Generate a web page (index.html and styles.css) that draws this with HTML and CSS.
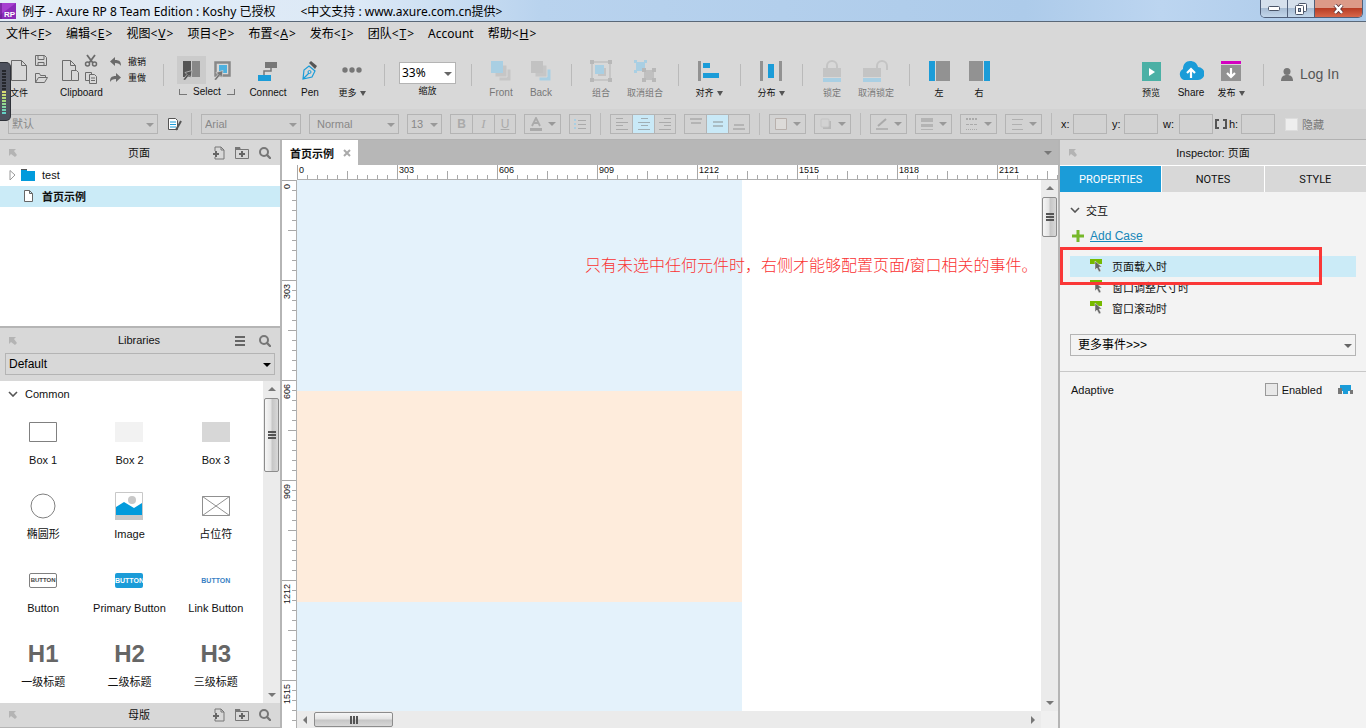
FILE: index.html
```html
<!DOCTYPE html>
<html lang="zh-CN">

<head>
    <meta charset="UTF-8">
    <meta name="viewport" content="width=device-width, initial-scale=1.0">
    <title>例子 - Axure RP 8</title>
    <link rel="stylesheet" href="styles.css">
</head>

<body>
    <!-- shared icons -->
    <svg class="sprite" aria-hidden="true">
        <symbol id="i-dock" viewBox="0 0 8 8">
            <path d="M0 0h7L5 2l3 4-2 2-4-3-2 2z" fill="#b4b4b4" />
        </symbol>
        <symbol id="i-addpage" viewBox="0 0 12 14">
            <path d="M2 5V1h6l3 3v9H2v-2M8 1v3h3" fill="none" stroke="#777" />
            <path d="M0 8h6M3 5v6" stroke="#666" stroke-width="2" />
        </symbol>
        <symbol id="i-addfolder" viewBox="0 0 14 12">
            <path d="M.5 2.500h13v9H.5z" fill="none" stroke="#777" />
            <path d="M0 0h5l1 3H0z" fill="#777" />
            <path d="M4 7h6M7 4v6" stroke="#666" stroke-width="2" />
        </symbol>
        <symbol id="i-search" viewBox="0 0 12 12">
            <circle cx="5" cy="5" r="4" fill="none" stroke="#777" stroke-width="2" />
            <path d="M8 8l3 3" stroke="#777" stroke-width="2.400" stroke-linecap="round" />
        </symbol>
        <symbol id="i-event" viewBox="0 0 12 13">
            <path d="M0 0h12v5H0z" fill="#76b900" />
            <path d="M5 2v9l2-2 2 4 2-1-2-4h3z" fill="#666" stroke="#f3f3f3" stroke-width=".5" />
        </symbol>
        <symbol id="i-chevron" viewBox="0 0 10 6">
            <path d="M1 1l4 4 4-4" fill="none" stroke="#555" stroke-width="1.600" />
        </symbol>
    </svg>

    <header class="title-bar">
        <svg class="app-icon" width="16" height="16" viewBox="0 0 16 16">
            <path d="M0 0h16v16H0z" fill="#8a2bb8" />
            <path d="M0 0h16L0 12z" fill="#a63fd0" />
            <path d="M1 0v16" stroke="#5b1580" />
            <text x="4" y="14" class="app-icon-text">RP</text>
        </svg>
        <span class="title-text">例子 - Axure RP 8 Team Edition : Koshy 已授权 &nbsp; &nbsp; &nbsp; &nbsp;&lt;中文支持 : www.axure.com.cn提供&gt;</span>
        <div class="window-buttons">
            <button aria-label="Minimize"><svg width="12" height="5"><rect x=".5" y=".5" width="11" height="4" rx="1" fill="#fff" stroke="#4a5568" /></svg></button>
            <button aria-label="Restore"><svg width="12" height="12" fill="#fff" stroke="#4a5568"><rect x="3.500" y=".5" width="8" height="8" rx="1" /><rect x=".5" y="2.500" width="8" height="9" rx="1" /><rect x="3.500" y="5.500" width="2" height="3" fill="#9fb4cc" /></svg></button>
            <button class="close" aria-label="Close"><svg width="13" height="10" viewBox="0 0 13 10"><path d="M3 1l7 8M10 1L3 9" stroke="#5b3035" stroke-width="4" /><path d="M3 1l7 8M10 1L3 9" stroke="#fff" stroke-width="2.500" /></svg></button>
        </div>
    </header>

    <nav class="menu">
        <a href="#">文件&lt;<u>F</u>&gt;</a>
        <a href="#">编辑&lt;<u>E</u>&gt;</a>
        <a href="#">视图&lt;<u>V</u>&gt;</a>
        <a href="#">项目&lt;<u>P</u>&gt;</a>
        <a href="#">布置&lt;<u>A</u>&gt;</a>
        <a href="#">发布&lt;<u>I</u>&gt;</a>
        <a href="#">团队&lt;<u>T</u>&gt;</a>
        <a href="#">Account</a>
        <a href="#">帮助&lt;<u>H</u>&gt;</a>
    </nav>

    <div class="toolbar">
        <div class="tool-group file-group">
            <button class="tool file-tool">
                <svg width="38" height="30" viewBox="0 0 38 30" fill="none" stroke="#6b6b6b">
                    <path d="M1.500 6.500h10l5 5v15h-15zM11.500 6.500v5h5" />
                    <path d="M25.500 1.500h9l2 2v8h-11zM28 1.500v4h6v-4M28 11.500v-3h6v3" />
                    <path d="M25.500 28.500v-9h4l1 2h5v2M25.500 28.500l3-5h9l-3 5z" />
                </svg>
                <span class="zh">文件</span>
            </button>
            <button class="tool clip-tool">
                <svg width="38" height="30" viewBox="0 0 38 30" fill="none" stroke="#6b6b6b">
                    <path d="M11.500 26.500h-9v-20h8l5 5v5M10.500 6.500v5h5M11.500 16.500h5l2 2v8h-7z" />
                    <path d="M27 1l6 8M35 1l-6 8" stroke-width="1.800" />
                    <circle cx="27.500" cy="10" r="2" stroke-width="1.500" />
                    <circle cx="34.500" cy="10" r="2" stroke-width="1.500" />
                    <path d="M29 26.500h-3.500v-8h6v2M29.500 20.500h5l2 2v7h-7zM31 24h4M31 26.500h4" />
                </svg>
                <span>Clipboard</span>
            </button>
            <div class="undo-tools">
                <button><svg width="12" height="9"><path d="M5 0v3c5 0 6 2 6 6C10 7 8 6 5 6v3L0 4.500z" fill="#6b6b6b" /></svg><span class="zh">撤销</span></button>
                <button><svg width="12" height="9"><path d="M6 0v3C1 3 0 5 0 9c1-2 3-3 6-3v3l5-4.500z" fill="#6b6b6b" /></svg><span class="zh">重做</span></button>
            </div>
        </div>
        <i class="sep"></i>

        <div class="tool-group select-group">
            <div class="select-tools">
                <div class="select-icons">
                    <button class="active" aria-label="Select intersecting">
                        <svg width="17" height="19" viewBox="0 0 17 19"><path d="M0 0h8v16H0z" fill="#555" /><path d="M9 0h8v16H9z" fill="#888" /><path d="M0 18.500l4-5-2-2 7-2-1 7-2-2-4 5z" fill="#555" stroke="#ccc" stroke-width=".7" /></svg>
                    </button>
                    <button aria-label="Select contained">
                        <svg width="17" height="19" viewBox="0 0 17 19"><path d="M1.500 1.500h14v13h-14z" fill="none" stroke="#888" stroke-width="2.500" /><path d="M5 4h8v8H5z" fill="#4db0de" /><path d="M0 18.500l4-5-2-2 7-2-1 7-2-2-4 5z" fill="#777" stroke="#d8d8d8" stroke-width=".7" /></svg>
                    </button>
                </div>
                <div class="select-label"><i></i><span>Select</span><i></i></div>
            </div>
            <button class="tool medium">
                <svg width="20" height="20"><path d="M7 1h12v6H7z" fill="#777" /><path d="M0 14h13v6H0z" fill="#1b9cd8" /><path d="M13 6v4H6v4" fill="none" stroke="#777" stroke-width="1.500" /></svg>
                <span>Connect</span>
            </button>
            <button class="tool medium">
                <svg width="16" height="20" viewBox="0 0 16 20"><path d="M1 18L2 9l5-4 6 5-3 6zM1 18l6-6" fill="none" stroke="#1b9cd8" stroke-width="1.200" /><circle cx="7.500" cy="11" r="1.500" fill="none" stroke="#1b9cd8" /><path d="M7 2l2-2 6 5-2 3z" fill="#555" /></svg>
                <span>Pen</span>
            </button>
            <button class="tool medium">
                <svg width="20" height="20" fill="#777"><circle cx="3" cy="9" r="2.700" /><circle cx="10" cy="9" r="2.700" /><circle cx="17" cy="9" r="2.700" /></svg>
                <span class="zh drop">更多</span>
            </button>
        </div>
        <i class="sep"></i>

        <div class="tool-group zoom-group">
            <div class="zoom">
                <div class="combo white">
                    <select id="zoom"><option>33%</option></select>
                </div>
                <label class="zh" for="zoom">缩放</label>
            </div>
        </div>
        <i class="sep"></i>

        <div class="tool-group order-group">
            <button class="tool" disabled>
                <svg width="20" height="20"><path d="M8 8h12v12H8z" fill="#c6c6c6" stroke="#d8d8d8" /><path d="M4 4h12v12H4z" fill="#c6c6c6" stroke="#d8d8d8" /><path d="M0 0h12v12H0z" fill="#a9cfe3" /></svg>
                <span>Front</span>
            </button>
            <button class="tool" disabled>
                <svg width="20" height="20"><path d="M8 8h12v12H8z" fill="#a9cfe3" stroke="#d8d8d8" /><path d="M4 4h12v12H4z" fill="#c6c6c6" stroke="#d8d8d8" /><path d="M0 0h12v12H0z" fill="#c2c2c2" /></svg>
                <span>Back</span>
            </button>
        </div>
        <i class="sep"></i>

        <div class="tool-group wide-group">
            <button class="tool wide" disabled>
                <svg width="22" height="22"><path d="M2 2h18v18H2z" fill="none" stroke="#b4b4b4" /><path d="M8 8h8v8H8z" fill="#c4c4c4" /><path d="M5 5h9v9H5z" fill="#a9cfe3" /><path d="M0 0h4v4H0zM18 0h4v4h-4zM0 18h4v4H0zM18 18h4v4h-4z" fill="#b8b8b8" /></svg>
                <span class="zh">组合</span>
            </button>
            <button class="tool wide" disabled>
                <svg width="22" height="22"><path d="M2 2h9v9H2z" fill="#a9cfe3" /><path d="M10 10h10v10H10z" fill="#c0c0c0" /><path d="M0 0h3v3H0zM10 0h3v3h-3zM0 10h3v3H0z" fill="#a9cfe3" /><path d="M8 8h4v4H8zM18 8h4v4h-4zM8 18h4v4H8zM18 18h4v4h-4z" fill="#b8b8b8" /></svg>
                <span class="zh">取消组合</span>
            </button>
        </div>
        <i class="sep"></i>

        <div class="tool-group single-group">
            <button class="tool">
                <svg width="22" height="20"><path d="M0 0h3v20H0z" fill="#929292" /><path d="M5 2h7v5H5zM5 12h16v5H5z" fill="#1b9cd8" /></svg>
                <span class="zh drop">对齐</span>
            </button>
        </div>
        <i class="sep"></i>

        <div class="tool-group single-group">
            <button class="tool">
                <svg width="22" height="20"><path d="M0 0h3v20H0zM19 0h3v20h-3z" fill="#929292" /><path d="M8 3h6v14H8z" fill="#1b9cd8" /></svg>
                <span class="zh drop">分布</span>
            </button>
        </div>
        <i class="sep"></i>

        <div class="tool-group wide-group">
            <button class="tool wide" disabled>
                <svg width="18" height="22"><path d="M4 9V6a5 5 0 0 1 10 0v3" fill="none" stroke="#c4c4c4" stroke-width="2" /><path d="M0 8h18v9H0z" fill="#c4c4c4" /><path d="M0 18h18v4H0z" fill="#a9cfe3" /></svg>
                <span class="zh">锁定</span>
            </button>
            <button class="tool wide" disabled>
                <svg width="26" height="22"><path d="M14 9V6a5 5 0 0 1 10 0v4" fill="none" stroke="#c4c4c4" stroke-width="2" /><path d="M0 8h18v9H0z" fill="#c4c4c4" /><path d="M0 18h18v4H0z" fill="#a9cfe3" /></svg>
                <span class="zh">取消锁定</span>
            </button>
        </div>
        <i class="sep"></i>

        <div class="tool-group">
            <button class="tool">
                <svg width="21" height="20"><path d="M0 0h6v20H0z" fill="#1b9cd8" /><path d="M7 0h14v20H7z" fill="#929292" /></svg>
                <span class="zh">左</span>
            </button>
            <button class="tool">
                <svg width="21" height="20"><path d="M0 0h14v20H0z" fill="#929292" /><path d="M15 0h6v20h-6z" fill="#1b9cd8" /></svg>
                <span class="zh">右</span>
            </button>
        </div>

        <div class="tool-group share-group">
            <button class="tool">
                <svg width="19" height="19"><path d="M0 0h19v19H0z" fill="#4bb0a5" /><path d="M7 6l6 4-6 4z" fill="#fff" /></svg>
                <span class="zh">预览</span>
            </button>
            <button class="tool">
                <svg width="26" height="20"><path d="M6 19a6 6 0 0 1-1-11C5 3 8 0 12 0s7 2 8 6a6.500 6.500 0 0 1 0 13z" fill="#1b9cd8" /><path d="M13 17V9M9 12l4-4 4 4" fill="none" stroke="#fff" stroke-width="2.200" /></svg>
                <span>Share</span>
            </button>
            <button class="tool">
                <svg width="20" height="20"><path d="M0 0h20v3H0z" fill="#d400c0" /><path d="M0 4h20v16H0z" fill="#929292" /><path d="M10 7v8M6 12l4 4 4-4" fill="none" stroke="#fff" stroke-width="2.200" /></svg>
                <span class="zh drop">发布</span>
            </button>
        </div>
        <i class="sep"></i>
        <button class="login">
            <svg width="12" height="13"><circle cx="6" cy="3.500" r="3.500" fill="#777" /><path d="M0 13c0-4 2-6 6-6s6 2 6 6z" fill="#777" /></svg>
            Log In
        </button>
        <div class="meter"><i></i></div>
    </div>

    <div class="format-bar">
        <div class="combo w-style"><select aria-label="样式" disabled><option>默认</option></select></div>
        <button class="plain" aria-label="Manage styles">
            <svg width="14" height="14" viewBox="0 0 14 14"><path d="M.500 1.500h7l2 2v9h-9z" fill="#fff" stroke="#555" /><path d="M2 5h6M2 7.500h6M2 10h6" stroke="#1b9cd8" /><path d="M8 13l5-9" stroke="#555" stroke-width="2" /></svg>
        </button>
        <i class="sep"></i>
        <div class="combo w-font"><select aria-label="Font" disabled><option>Arial</option></select></div>
        <div class="combo w-weight"><select aria-label="Weight" disabled><option>Normal</option></select></div>
        <div class="combo w-size"><select aria-label="Size" disabled><option>13</option></select></div>
        <div class="seg">
            <button disabled><b>B</b></button>
            <button disabled><em>I</em></button>
            <button disabled><u>U</u></button>
        </div>
        <button class="dd" disabled aria-label="Text color"><svg width="14" height="14"><path d="M3 9l4-8 4 8M4 6h6" fill="none" stroke="#aaa" stroke-width="1.800" /><path d="M1 11h12v3H1z" fill="#aaa" /></svg></button>
        <button class="box" disabled aria-label="Bullets"><svg width="12" height="12"><path d="M0 1h2v2H0zM0 5h2v2H0zM0 9h2v2H0z" fill="#a9cfe3" /><path d="M4 2.500h8M4 6.500h8M4 10.500h8" stroke="#aaa" /></svg></button>
        <i class="sep"></i>
        <div class="seg">
            <button disabled aria-label="Left"><svg width="12" height="12"><path d="M0 .5h7M0 4.500h12M0 7.500h7M0 11.500h12" stroke="#aaa" /></svg></button>
            <button class="on" disabled aria-label="Center"><svg width="12" height="12"><path d="M3 .5h7M0 4.500h12M3 7.500h7M0 11.500h12" stroke="#a0aeb4" /></svg></button>
            <button disabled aria-label="Right"><svg width="12" height="12"><path d="M5 .5h7M0 4.500h12M5 7.500h7M0 11.500h12" stroke="#aaa" /></svg></button>
        </div>
        <div class="seg">
            <button disabled aria-label="Top"><svg width="12" height="12"><path d="M0 1h12M1 5h10" stroke="#aaa" stroke-width="1.500" /></svg></button>
            <button class="on" disabled aria-label="Middle"><svg width="12" height="12"><path d="M1 4h10M1 8h10" stroke="#a0aeb4" stroke-width="1.500" /></svg></button>
            <button disabled aria-label="Bottom"><svg width="12" height="12"><path d="M1 7h10M0 11h12" stroke="#aaa" stroke-width="1.500" /></svg></button>
        </div>
        <i class="sep"></i>
        <button class="dd" disabled aria-label="Fill"><svg width="14" height="14"><path d="M1.500 1.500h11v11h-11z" fill="#dcdad8" stroke="#b8b0ac" /></svg></button>
        <button class="dd" disabled aria-label="Shadow"><svg width="14" height="14"><path d="M4 4h8v8H4z" fill="#b8b8b8" /><rect x="2" y="2" width="8" height="8" rx="1" fill="#d2d2d2" stroke="#c4c4c4" /></svg></button>
        <i class="sep"></i>
        <button class="dd" disabled aria-label="Line color"><svg width="14" height="14"><path d="M3 9l8-7" stroke="#aaa" stroke-width="2" /><path d="M1 11h12v2H1z" fill="#b4b4b4" /></svg></button>
        <button class="dd" disabled aria-label="Line width"><svg width="14" height="14"><path d="M1 1h12v4H1zM1 7h12v3H1zM1 12h12v1H1z" fill="#b4b4b4" /></svg></button>
        <button class="dd" disabled aria-label="Line style"><svg width="14" height="14" fill="none" stroke="#aaa"><path d="M1 2h12" stroke-width="2" stroke-dasharray="2 1" /><path d="M1 7.500h12" stroke-dasharray="3 1" /><path d="M1 12.500h12" stroke-dasharray="1 1" /></svg></button>
        <button class="dd" disabled aria-label="Arrow style"><svg width="14" height="14"><path d="M2 2.500h11M2 7.500h10M2 12.500h11" stroke="#b0b0b0" /></svg></button>
        <i class="sep"></i>
        <div class="fields">
            <label for="pos-x">x:</label><input type="text" id="pos-x" disabled>
            <label for="pos-y">y:</label><input type="text" id="pos-y" disabled>
            <label for="size-w">w:</label><input type="text" id="size-w" disabled>
            <svg class="lock-ratio" width="12" height="10"><path d="M4 1H1v8h3M8 1h3v8H8" fill="none" stroke="#555" stroke-width="2" /></svg>
            <label for="size-h">h:</label><input type="text" id="size-h" disabled>
        </div>
        <label class="hide-check"><input type="checkbox" disabled>隐藏</label>
    </div>

    <main class="main">
        <aside class="left">
            <div class="panel-head">
                <svg width="8" height="8"><use href="#i-dock" /></svg>
                <h2>页面</h2>
                <button aria-label="Add page"><svg width="12" height="14"><use href="#i-addpage" /></svg></button>
                <button aria-label="Add folder"><svg width="14" height="12"><use href="#i-addfolder" /></svg></button>
                <button aria-label="Search"><svg width="12" height="12"><use href="#i-search" /></svg></button>
            </div>
            <ul class="tree">
                <li>
                    <svg width="27" height="12"><path d="M1 1.500l5 4.500-5 5z" fill="#fff" stroke="#999" /><path d="M12 0h6v2h8v10H12z" fill="#029bdc" /><path d="M12 0h6v1h-6z" fill="#555" /></svg>
                    <span>test</span>
                </li>
                <li class="selected">
                    <svg width="27" height="12"><path d="M15.500.500h5l3 3v8h-8zM20.500.500v3h3" fill="#fff" stroke="#666" /></svg>
                    <span>首页示例</span>
                </li>
            </ul>

            <div class="panel-head lib-head">
                <svg width="8" height="8"><use href="#i-dock" /></svg>
                <h2>Libraries</h2>
                <button aria-label="Options"><svg width="10" height="10"><path d="M0 1h10M0 5h10M0 9h10" stroke="#666" stroke-width="2" /></svg></button>
                <button aria-label="Search"><svg width="12" height="12"><use href="#i-search" /></svg></button>
            </div>
            <div class="lib-select">
                <div class="combo dark"><select aria-label="Library"><option>Default</option></select></div>
            </div>
            <div class="library">
                <div class="lib-content">
                    <h3><svg width="10" height="6"><use href="#i-chevron" /></svg>Common</h3>
                    <div class="widgets">
                        <figure><svg width="28" height="20"><path d="M.500.500h27v19H.500z" fill="#fff" stroke="#808080" /></svg><figcaption>Box 1</figcaption></figure>
                        <figure><svg width="28" height="20"><path d="M0 0h28v20H0z" fill="#f2f2f2" /></svg><figcaption>Box 2</figcaption></figure>
                        <figure><svg width="28" height="20"><path d="M0 0h28v20H0z" fill="#d7d7d7" /></svg><figcaption>Box 3</figcaption></figure>
                        <figure><svg width="26" height="26"><circle cx="13" cy="13" r="12" fill="#fff" stroke="#808080" /></svg><figcaption>椭圆形</figcaption></figure>
                        <figure><svg width="28" height="28"><path d="M.500.500h27v27H.500z" fill="#fff" stroke="#c8c8c8" /><path d="M0 23h28v5H0z" fill="#c8c8c8" /><circle cx="17" cy="8" r="4" fill="#c8c8c8" /><path d="M1 15l8-5 10 6 8-5v12H1z" fill="#029bdc" /></svg><figcaption>Image</figcaption></figure>
                        <figure><svg width="28" height="20"><path d="M.500.500h27v19H.500zM.500.500l27 19M27.500.500l-27 19" fill="none" stroke="#909090" /></svg><figcaption>占位符</figcaption></figure>
                        <figure><span class="mini outline">BUTTON</span><figcaption>Button</figcaption></figure>
                        <figure><span class="mini primary">BUTTON</span><figcaption>Primary Button</figcaption></figure>
                        <figure><span class="mini link">BUTTON</span><figcaption>Link Button</figcaption></figure>
                        <figure><span class="heading">H1</span><figcaption>一级标题</figcaption></figure>
                        <figure><span class="heading">H2</span><figcaption>二级标题</figcaption></figure>
                        <figure><span class="heading">H3</span><figcaption>三级标题</figcaption></figure>
                    </div>
                </div>
                <div class="scroll-y">
                    <i class="up"></i>
                    <div class="thumb lib-thumb"></div>
                    <i class="down"></i>
                </div>
            </div>

            <div class="panel-head master-head">
                <svg width="8" height="8"><use href="#i-dock" /></svg>
                <h2>母版</h2>
                <button aria-label="Add master"><svg width="12" height="14"><use href="#i-addpage" /></svg></button>
                <button aria-label="Add folder"><svg width="14" height="12"><use href="#i-addfolder" /></svg></button>
                <button aria-label="Search"><svg width="12" height="12"><use href="#i-search" /></svg></button>
            </div>
        </aside>

        <section class="center">
            <div class="doc-tabs">
                <div class="doc-tab">首页示例<button aria-label="Close tab"><svg width="8" height="8"><path d="M1 1l6 6M7 1L1 7" stroke="#aaa" stroke-width="2" /></svg></button></div>
                <i class="down"></i>
            </div>
            <div class="workspace">
                <div class="ruler-x">
                    <span>0</span><span>303</span><span>606</span><span>909</span><span>1212</span><span>1515</span><span>1818</span><span>2121</span>
                </div>
                <div class="ruler-y">
                    <span>0</span><span>303</span><span>606</span><span>909</span><span>1212</span><span>1515</span>
                </div>
                <div class="canvas">
                    <div class="page-shape">
                        <div class="band"></div>
                        <div class="band warm"></div>
                        <div class="band rest"></div>
                    </div>
                    <p class="note">只有未选中任何元件时，右侧才能够配置页面/窗口相关的事件。</p>
                </div>
                <div class="scroll-y">
                    <i class="up"></i>
                    <div class="thumb canvas-thumb"></div>
                    <i class="down"></i>
                </div>
                <div class="scroll-x">
                    <i class="prev"></i>
                    <div class="thumb"></div>
                    <i class="next"></i>
                </div>
            </div>
        </section>

        <aside class="inspector">
            <div class="panel-head">
                <svg width="8" height="8"><use href="#i-dock" /></svg>
                <h2>Inspector: 页面</h2>
            </div>
            <div class="tabs">
                <button class="current">PROPERTIES</button>
                <button>NOTES</button>
                <button>STYLE</button>
            </div>
            <div class="interactions">
                <h3><svg width="10" height="6"><use href="#i-chevron" /></svg>交互</h3>
                <div class="add-case">
                    <svg width="12" height="12"><path d="M0 6h12M6 0v12" stroke="#76b82a" stroke-width="3" /></svg>
                    <a href="#">Add Case</a>
                </div>
                <ul class="events">
                    <li class="selected"><svg width="12" height="13"><use href="#i-event" /></svg>页面载入时</li>
                    <li><svg width="12" height="13"><use href="#i-event" /></svg>窗口调整尺寸时</li>
                    <li><svg width="12" height="13"><use href="#i-event" /></svg>窗口滚动时</li>
                </ul>
                <div class="combo more-events"><select aria-label="更多事件"><option>更多事件&gt;&gt;&gt;</option></select></div>
                <div class="highlight"></div>
            </div>
            <div class="adaptive">
                <span>Adaptive</span>
                <label><input type="checkbox">Enabled</label>
                <svg width="15" height="10"><path d="M2 0h11v6H2z" fill="#1b9cd8" /><path d="M0 3h4v6H0zM12 5h3v4h-3z" fill="#777" /><path d="M5 6h5v3H5z" fill="#1b9cd8" /></svg>
            </div>
        </aside>
    </main>
</body>

</html>
```
FILE: styles.css
```css
* {
    box-sizing: border-box;
}

body {
    margin: 0;
    height: 100vh;
    display: flex;
    flex-direction: column;
    overflow: hidden;
    background-color: #d8d8d8;
    color: #111;
    font-family: "Liberation Sans", "Noto Sans CJK SC", sans-serif;
    font-size: 11px;
}

button {
    border: 0;
    padding: 0;
    background: none;
    color: inherit;
    font: inherit;
}

button,
select,
input {
    border-radius: 0;
}

svg {
    display: block;
    flex: none;
}

ul,
h2,
h3,
p,
figure {
    margin: 0;
    padding: 0;
    list-style: none;
    font-size: 11px;
    font-weight: normal;
}

.sprite {
    position: absolute;
    width: 0;
    height: 0;
}

/* title bar and menu */
.title-bar {
    flex: none;
    height: 22px;
    display: flex;
    align-items: center;
    gap: 6px;
    border-bottom: 1px solid #5a6878;
    background: linear-gradient(to right, #e4edf7 0, #dce9f6 360px, #b9d3ee 540px, #adcbea 75%, #bcd5f0 85%, #a9c8e8);
    font-family: "Noto Sans", "Noto Sans CJK SC", sans-serif;
    font-size: 12px;
    color: #000;
}

.app-icon-text {
    font: bold 8px "Liberation Sans", sans-serif;
    fill: #fff;
}

.title-text {
    flex: 1;
    white-space: nowrap;
}

.window-buttons {
    align-self: flex-start;
    display: flex;
    margin-right: 3px;
    border: 1px solid #50607a;
    border-top: 0;
    border-radius: 0 0 5px 5px;
    overflow: hidden;
}

.window-buttons button {
    width: 27px;
    height: 17px;
    display: flex;
    align-items: center;
    justify-content: center;
    border-right: 1px solid #50607a;
    background: linear-gradient(#d5e0ec 45%, #a8bdd4 50%, #c2d6ea);
}

.window-buttons .close {
    width: 47px;
    border-right: 0;
    background: linear-gradient(#dc9a88 45%, #b83e26 50%, #d8674a);
}

.menu {
    flex: none;
    height: 24px;
    display: flex;
    align-items: center;
    gap: 14px;
    padding-left: 6px;
    font-family: "Noto Sans", "Noto Sans CJK SC", sans-serif;
    font-size: 12px;
    line-height: 18px;
}

.menu a {
    color: #000;
    text-decoration: none;
}

.menu u {
    margin: 0 1px;
}

/* toolbar */
.toolbar {
    flex: none;
    position: relative;
    height: 63px;
    display: flex;
    font-size: 10px;
}

.sep {
    flex: none;
    width: 1px;
    height: 22px;
    background-color: #bababa;
}

.toolbar .sep {
    margin-top: 18px;
}

.tool-group {
    display: flex;
    padding: 10px 9px 0;
}

.tool {
    width: 40px;
    height: 44px;
    display: flex;
    flex-direction: column;
    align-items: center;
    white-space: nowrap;
    line-height: 14px;
}

.tool svg {
    margin: auto;
}

.tool:disabled {
    color: #777;
}

.tool.medium {
    width: 42px;
}

.tool.wide {
    width: 44px;
}

.order-group {
    padding-right: 10px;
}

.wide-group {
    padding: 10px 11px 0 7px;
}

.single-group {
    padding: 10px 11px 0 10px;
}

.zh {
    font-size: 9px;
}

.drop::after {
    content: "";
    display: inline-block;
    margin-left: 3px;
    border: 3px solid transparent;
    border-top: 5px solid #555;
    border-bottom: 0;
}

.file-group {
    width: 163px;
    padding: 8px 0 0 10px;
}

.file-tool,
.clip-tool {
    width: 50px;
    height: 48px;
    align-items: flex-start;
}

.file-tool svg,
.clip-tool svg {
    margin: 0 0 2px;
}

.undo-tools {
    display: flex;
    flex-direction: column;
    gap: 2px;
}

.undo-tools button {
    height: 14px;
    display: flex;
    align-items: center;
    gap: 6px;
}

.select-group {
    padding: 10px 11px 0 13px;
}

.select-tools {
    width: 60px;
    margin-right: 10px;
}

.select-icons {
    display: flex;
    gap: 2px;
}

.select-icons button {
    width: 30px;
    height: 28px;
    display: flex;
    align-items: center;
    justify-content: center;
}

.select-icons .active {
    background-color: #cbcbcb;
}

.select-label {
    display: flex;
    justify-content: center;
    gap: 6px;
    margin-top: 1px;
    line-height: 14px;
}

.select-label i {
    width: 8px;
    height: 6px;
    border: 1px solid #777;
    border-width: 0 0 1px 1px;
    margin-top: 4px;
}

.select-label i:last-child {
    border-width: 0 1px 1px 0;
}

.zoom-group {
    padding: 16px 15px 0 14px;
}

.zoom {
    width: 57px;
    display: flex;
    flex-direction: column;
    align-items: center;
    line-height: 14px;
}

.share-group {
    margin-left: auto;
    padding-right: 12px;
}

.login {
    width: 102px;
    height: 20px;
    margin-top: 18px;
    padding-left: 17px;
    display: flex;
    align-items: center;
    gap: 7px;
    font-size: 14px;
    color: #555;
}

.meter {
    position: absolute;
    left: 0;
    top: 16px;
    z-index: 2;
    width: 11px;
    height: 59px;
    padding: 6px 4px 6px 2px;
    border: 1px solid #2e3138;
    border-left: 0;
    border-radius: 0 5px 5px 0;
    background-color: #4e525e;
}

.meter i {
    display: block;
    height: 100%;
    background:
        repeating-linear-gradient(#4e525e 0 1px, transparent 1px 3px),
        linear-gradient(#25272c 48%, #e2dc70 48%, #a5d97b 70%, #5fd0cb);
}

/* drop-downs */
.combo {
    flex: none;
    position: relative;
    height: 20px;
}

.combo::after {
    content: "";
    position: absolute;
    right: 4px;
    top: 50%;
    margin-top: -1px;
    border: 4px solid transparent;
    border-top-color: #666;
    border-bottom: 0;
    pointer-events: none;
}

.combo select {
    width: 100%;
    height: 100%;
    padding: 0 14px 0 3px;
    border: 1px solid #b4b4b4;
    background: none;
    appearance: none;
    color: #000;
    font: inherit;
    font-size: 12px;
}

.combo.white {
    width: 57px;
    height: 22px;
}

.combo.white select {
    background-color: #fff;
    padding-left: 2px;
    font-family: "Noto Sans", sans-serif;
}

.combo.dark {
    height: 22px;
}

.combo.dark::after {
    border-top-color: #000;
}

/* format bar */
.format-bar {
    flex: none;
    height: 31px;
    display: flex;
    align-items: center;
    gap: 8px;
    padding-left: 8px;
    border-bottom: 1px solid #b2b2b2;
    background-color: #d2d2d2;
}

.format-bar .sep {
    margin: 0 1px;
}

.format-bar .combo select {
    color: #888;
    font-size: 11px;
    opacity: 1;
}

.format-bar .combo::after {
    border-top-color: #999;
}

.format-bar .w-weight select {
    padding-left: 7px;
}

.w-style {
    width: 150px;
}

.w-font {
    width: 100px;
}

.w-weight {
    width: 90px;
}

.w-size {
    width: 35px;
}

.plain {
    width: 16px;
    padding-left: 2px;
}

.seg {
    flex: none;
    display: flex;
    border: 1px solid #b4b4b4;
}

.seg button {
    width: 22px;
    height: 18px;
    display: flex;
    align-items: center;
    justify-content: center;
    border-right: 1px solid #b4b4b4;
    color: #aaa;
    font-size: 12px;
}

.seg button:last-child {
    width: 20px;
    border-right: 0;
}

.seg em {
    font-family: "Liberation Serif", serif;
    font-size: 13px;
}

.seg .on {
    background-color: #c9e9f7;
}

.dd,
.box {
    flex: none;
    width: 37px;
    height: 20px;
    display: flex;
    align-items: center;
    justify-content: space-between;
    padding: 0 4px;
    border: 1px solid #b4b4b4;
}

.box {
    width: 22px;
}

.dd::after {
    content: "";
    border: 4px solid transparent;
    border-top-color: #999;
    border-bottom: 0;
}

.fields {
    display: flex;
    align-items: center;
}

.fields label {
    min-width: 12px;
}

.fields input {
    width: 34px;
    height: 20px;
    margin-right: 5px;
    border: 1px solid #b4b4b4;
    background: none;
}

.fields label[for="size-w"] {
    width: 16px;
}

.fields #size-w,
.fields #size-h {
    margin-right: 2px;
}

.lock-ratio {
    margin-right: 2px;
}

.hide-check {
    display: flex;
    align-items: center;
    gap: 4px;
    color: #777;
    font-size: 11px;
    white-space: nowrap;
}

input[type="checkbox"] {
    width: 13px;
    height: 13px;
    margin: 0;
    border: 1px solid #999;
    background-color: #e8e8e8;
    appearance: none;
}

.hide-check input[type="checkbox"] {
    border-color: #ddd;
    background-color: #eee;
}

/* panels */
.main {
    flex: 1;
    min-height: 0;
    display: grid;
    grid-template-columns: 282px 1fr 308px;
}

.left {
    min-height: 0;
    display: flex;
    flex-direction: column;
    border-right: 2px solid #b5b5b5;
}

.panel-head {
    position: relative;
    flex: none;
    height: 25px;
    display: flex;
    align-items: center;
    gap: 10px;
    padding: 0 9px;
    background-color: #d8d8d8;
}

.panel-head > svg {
    margin-right: auto;
}

.panel-head h2 {
    position: absolute;
    left: 0;
    right: 0;
    padding-bottom: 2px;
    text-align: center;
    pointer-events: none;
}

.left .panel-head h2 {
    right: 2px;
}

.tree {
    height: 161px;
    background-color: #fff;
}

.tree li {
    height: 21px;
    display: flex;
    align-items: center;
    gap: 6px;
    padding: 0 0 2px 9px;
}

.selected {
    background-color: #cbebf7;
}

.tree .selected {
    font-weight: bold;
}

.lib-head {
    height: 27px;
    border-top: 2px solid #b5b5b5;
}

.lib-head button:first-of-type {
    margin-right: 4px;
}

.lib-select {
    padding: 0 5px 6px;
}

.library {
    flex: 1;
    min-height: 0;
    display: flex;
    background-color: #fff;
}

.lib-content {
    flex: 1;
    overflow: hidden;
}

.library h3 {
    height: 29px;
    display: flex;
    align-items: center;
    gap: 7px;
    padding: 0 0 3px 8px;
}

.widgets {
    display: grid;
    grid-template-columns: repeat(3, 1fr);
    margin-right: 4px;
}

.widgets figure {
    height: 74px;
    display: grid;
    grid-template-rows: 44px 12px;
    justify-items: center;
    align-items: center;
    line-height: 12px;
    white-space: nowrap;
}

.mini {
    width: 28px;
    display: flex;
    justify-content: center;
    border-radius: 2px;
    font-size: 7px;
    line-height: 15px;
    font-weight: bold;
}

.mini.outline {
    border: 1px solid #808080;
    color: #444;
    font-size: 6px;
    line-height: 13px;
}

.mini.primary {
    background-color: #1b9cd8;
    color: #fff;
}

.mini.link {
    color: #3a7fc4;
}

.heading {
    font-size: 24px;
    font-weight: bold;
    color: #666;
}

.master-head {
    border-bottom: 1px solid #b5b5b5;
}

/* scroll bars */
.scroll-y,
.scroll-x {
    flex: none;
    display: flex;
    align-items: center;
    background-color: #ebebeb;
}

.scroll-y {
    flex-direction: column;
    width: 17px;
    padding: 6px 0;
}

.scroll-x {
    padding: 0 6px;
}

.up,
.down,
.prev,
.next {
    border: 4px solid transparent;
}

.up {
    border-top: 0;
    border-bottom-color: #777;
}

.down {
    border-bottom: 0;
    border-top-color: #777;
}

.prev {
    border-left: 0;
    border-right-color: #777;
}

.next {
    border-right: 0;
    border-left-color: #777;
}

.scroll-y .down {
    margin-top: auto;
}

.scroll-x .next {
    margin-left: auto;
}

.thumb {
    display: flex;
    align-items: center;
    justify-content: center;
    border: 1px solid #8c8c8c;
    border-radius: 2px;
}

.scroll-y .thumb {
    width: 15px;
    margin-top: 7px;
    background: linear-gradient(to right, #f6f6f6, #e4e4e4 45%, #c6c6c6 55%, #d8d8d8);
}

.scroll-x .thumb {
    width: 79px;
    height: 15px;
    margin-left: 7px;
    background: linear-gradient(#f6f6f6, #e4e4e4 45%, #c6c6c6 55%, #d8d8d8);
}

.thumb::after {
    content: "";
    width: 8px;
    height: 8px;
    background: repeating-linear-gradient(#555 0 2px, transparent 2px 3px);
}

.scroll-x .thumb::after {
    background: repeating-linear-gradient(to right, #555 0 2px, transparent 2px 3px);
}

.lib-thumb {
    height: 74px;
}

.canvas-thumb {
    height: 40px;
}

/* canvas */
.center {
    min-width: 0;
    min-height: 0;
    display: flex;
    flex-direction: column;
}

.doc-tabs {
    flex: none;
    height: 25px;
    display: flex;
    align-items: center;
    justify-content: space-between;
    padding-right: 6px;
    background-color: #b7b7b7;
}

.doc-tab {
    height: 25px;
    display: flex;
    align-items: center;
    gap: 9px;
    padding: 0 7px 0 8px;
    background-color: #fff;
    font-weight: bold;
}

.workspace {
    flex: 1;
    min-height: 0;
    display: grid;
    grid-template: 15px 1fr 17px / 15px 1fr 17px;
    background-color: #fff;
}

.ruler-x,
.ruler-y {
    display: flex;
    overflow: hidden;
    font-size: 9px;
    line-height: 11px;
}

.ruler-x {
    grid-area: 1 / 2 / 2 / 4;
    border-bottom: 1px solid #b0b0b0;
    background:
        repeating-linear-gradient(to right, #a8a8a8 0 1px, transparent 1px 100px),
        repeating-linear-gradient(to right, transparent 0 50px, #a8a8a8 50px 51px, transparent 51px 100px) bottom / 100% 8px no-repeat,
        repeating-linear-gradient(to right, #a8a8a8 0 1px, transparent 1px 10px) bottom / 100% 4px no-repeat;
}

.ruler-x span {
    flex: none;
    width: 100px;
    padding-left: 2px;
}

.ruler-y {
    grid-area: 2 / 1 / 4 / 2;
    flex-direction: column;
    border-right: 1px solid #b0b0b0;
    background:
        repeating-linear-gradient(#a8a8a8 0 1px, transparent 1px 100px),
        repeating-linear-gradient(transparent 0 50px, #a8a8a8 50px 51px, transparent 51px 100px) right / 8px 100% no-repeat,
        repeating-linear-gradient(#a8a8a8 0 1px, transparent 1px 10px) right / 4px 100% no-repeat;
}

.ruler-y span {
    flex: none;
    height: 100px;
    padding-bottom: 4px;
    writing-mode: vertical-rl;
    transform: rotate(180deg);
    text-align: right;
}

.canvas {
    grid-area: 2 / 2 / 3 / 3;
    position: relative;
    overflow: hidden;
}

.page-shape {
    width: 445px;
    height: 100%;
    display: flex;
    flex-direction: column;
}

.band {
    flex: none;
    height: 211px;
    background-color: #e4f2fb;
}

.band.warm {
    background-color: #feecdc;
}

.band.rest {
    flex: 1;
}

.note {
    position: absolute;
    left: 288px;
    top: 74px;
    color: #fa3232;
    font-size: 16px;
    font-weight: 300;
    line-height: 24px;
    white-space: nowrap;
}

.workspace .scroll-y {
    grid-area: 2 / 3 / 3 / 4;
}

.workspace .scroll-x {
    grid-area: 3 / 2 / 4 / 3;
}

.workspace::after {
    content: "";
    grid-area: 3 / 3 / 4 / 4;
    background-color: #f0f0f0;
}

/* inspector */
.inspector {
    border-left: 2px solid #b5b5b5;
    background-color: #f3f3f3;
}

.tabs {
    height: 27px;
    display: grid;
    grid-template-columns: repeat(3, 1fr);
    gap: 1px;
    padding-top: 1px;
    background-color: #fff;
    font-family: Roboto, sans-serif;
}

.tabs button {
    background-color: #d8d8d8;
}

.tabs .current {
    background-color: #1b9cd8;
    color: #fff;
}

.interactions {
    position: relative;
    padding: 8px 10px 15px;
    border-bottom: 1px solid #c8c8c8;
}

.interactions h3 {
    height: 20px;
    display: flex;
    align-items: center;
    gap: 6px;
}

.add-case {
    display: flex;
    align-items: center;
    gap: 6px;
    height: 32px;
    padding-left: 2px;
    font-size: 12px;
}

.add-case a {
    color: #1686b8;
}

.events {
    margin-top: 4px;
}

.events li {
    height: 21px;
    display: flex;
    align-items: center;
    gap: 10px;
    padding: 0 0 2px 20px;
}

.more-events {
    height: 22px;
    margin-top: 15px;
}

.more-events select {
    padding-left: 7px;
}

.highlight {
    position: absolute;
    left: 0;
    top: 55px;
    width: 262px;
    height: 38px;
    border: 3px solid #fa3737;
}

.adaptive {
    display: flex;
    align-items: center;
    gap: 16px;
    height: 35px;
    padding: 0 13px 0 11px;
}

.adaptive span {
    margin-right: auto;
}

.adaptive label {
    display: flex;
    align-items: center;
    gap: 4px;
}
```
